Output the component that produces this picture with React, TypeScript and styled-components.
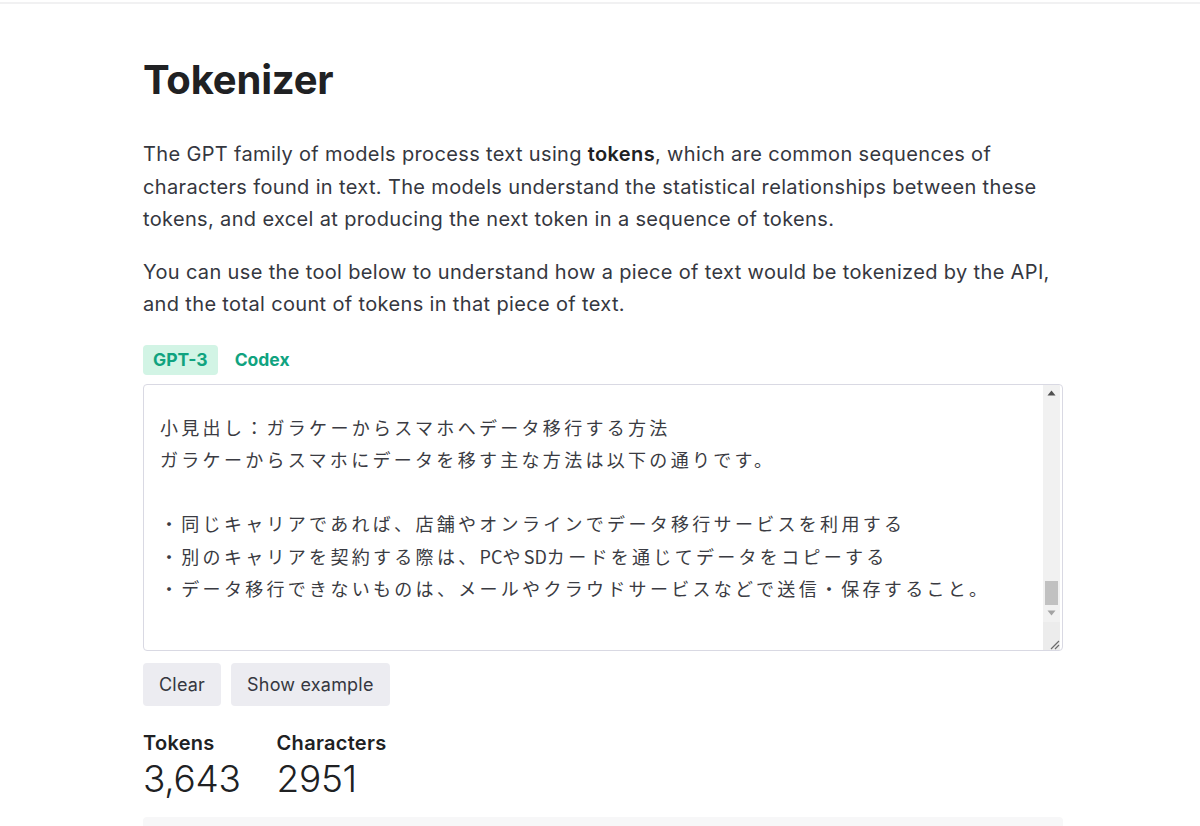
import React from 'react';
import styled, { createGlobalStyle } from 'styled-components';

const GlobalStyle = createGlobalStyle`
  html, body {
    margin: 0;
    padding: 0;
    background: #ffffff;
  }
  body {
    font-family: Inter, "Noto Sans", "Liberation Sans", sans-serif;
    color: #353740;
  }
`;

const TopRule = styled.div`
  height: 2px;
  margin-top: 2px;
  background: #f1f1f2;
`;

const Page = styled.main`
  width: 920px;
  margin-left: 143px;
  padding-top: 52px;
`;

const Title = styled.h1`
  margin: 0;
  font-size: 40px;
  line-height: 48px;
  font-weight: 700;
  color: #202123;
  letter-spacing: -0.2px;
`;

const Para = styled.p`
  margin: 0 0 20px;
  font-size: 20px;
  line-height: 32.5px;
  color: #353740;
  letter-spacing: 0.35px;
  white-space: nowrap;
  &:first-of-type {
    margin-top: 34px;
  }
  b {
    font-weight: 600;
    color: #202123;
  }
`;

const Tabs = styled.div`
  display: flex;
  gap: 7px;
  margin-top: 24px;
`;

const Tab = styled.button<{ $active?: boolean }>`
  border: none;
  border-radius: 4px;
  padding: 0 10px;
  height: 30px;
  font-family: inherit;
  font-size: 17.5px;
  font-weight: 700;
  color: #10a37f;
  background: ${(p) => (p.$active ? '#d2f4e5' : 'transparent')};
  cursor: pointer;
`;

const Editor = styled.div`
  display: flex;
  margin-top: 9px;
  height: 265px;
  border: 1px solid #d9d9e3;
  border-radius: 4px;
  overflow: hidden;
`;

const EditorText = styled.div`
  flex: 1;
  padding: 26px 0 0 16px;
  font-family: "Noto Sans CJK JP", "Noto Sans", sans-serif;
  font-weight: 400;
  font-size: 18px;
  line-height: 32.3px;
  letter-spacing: 3.3px;
  color: #3a3b42;
  white-space: pre;
`;

const Latin = styled.span`
  letter-spacing: 0;
`;

const Scrollbar = styled.div`
  width: 17px;
  margin-right: 2px;
  display: flex;
  flex-direction: column;
  background: #f1f1f1;
`;

const ArrowBox = styled.div<{ $dim?: boolean }>`
  height: 17px;
  display: flex;
  align-items: center;
  justify-content: center;
  color: ${(p) => (p.$dim ? '#a3a3a3' : '#505050')};
`;

const Track = styled.div`
  flex: 1;
  display: flex;
  flex-direction: column;
  justify-content: flex-end;
  padding: 0 2px;
`;

const Thumb = styled.div`
  height: 24px;
  background: #c1c1c1;
`;

const Corner = styled.div`
  height: 28px;
  background: #ececec;
  display: flex;
  align-items: flex-end;
  justify-content: flex-end;
`;

const Actions = styled.div`
  display: flex;
  gap: 10px;
  margin-top: 12px;
`;

const Btn = styled.button`
  border: none;
  border-radius: 4px;
  height: 43px;
  padding: 0 16px;
  font-family: inherit;
  font-size: 18px;
  letter-spacing: 0.2px;
  color: #353740;
  background: #ececf1;
  cursor: pointer;
`;

const Stats = styled.div`
  display: flex;
  gap: 36px;
  margin-top: 25px;
`;

const Stat = styled.div`
  display: flex;
  flex-direction: column;
`;

const StatLabel = styled.div`
  font-size: 20px;
  line-height: 24px;
  font-weight: 600;
  color: #202123;
  letter-spacing: 0.3px;
`;

const StatValue = styled.div`
  margin-top: 2px;
  font-size: 37px;
  line-height: 44px;
  font-weight: 300;
  color: #202123;
  letter-spacing: -0.3px;
`;

const TokenView = styled.div`
  margin-top: 16px;
  height: 30px;
  background: #f7f7f8;
  border-radius: 4px 4px 0 0;
`;

export default function App() {
  return (
    <>
      <GlobalStyle />
      <TopRule />
      <Page>
        <Title>Tokenizer</Title>
        <Para>
          The GPT family of models process text using <b>tokens</b>, which are common sequences of
          <br />
          characters found in text. The models understand the statistical relationships between these
          <br />
          tokens, and excel at producing the next token in a sequence of tokens.
        </Para>
        <Para>
          You can use the tool below to understand how a piece of text would be tokenized by the API,
          <br />
          and the total count of tokens in that piece of text.
        </Para>
        <Tabs>
          <Tab $active>GPT-3</Tab>
          <Tab>Codex</Tab>
        </Tabs>
        <Editor>
          <EditorText>
            {'小見出し：ガラケーからスマホへデータ移行する方法\n'}
            {'ガラケーからスマホにデータを移す主な方法は以下の通りです。\n'}
            {'\n'}
            {'・同じキャリアであれば、店舗やオンラインでデータ移行サービスを利用する\n'}
            {'・別のキャリアを契約する際は、'}
            <Latin>PC</Latin>
            {'や'}
            <Latin>SD</Latin>
            {'カードを通じてデータをコピーする\n'}
            {'・データ移行できないものは、メールやクラウドサービスなどで送信・保存すること。'}
          </EditorText>
          <Scrollbar>
            <ArrowBox>
              <svg width="9" height="6" viewBox="0 0 9 6">
                <path d="M4.5 0.5 L8.5 5.5 L0.5 5.5 Z" fill="currentColor" />
              </svg>
            </ArrowBox>
            <Track>
              <Thumb />
            </Track>
            <ArrowBox $dim>
              <svg width="9" height="6" viewBox="0 0 9 6">
                <path d="M0.5 0.5 L8.5 0.5 L4.5 5.5 Z" fill="currentColor" />
              </svg>
            </ArrowBox>
            <Corner>
              <svg width="12" height="12" viewBox="0 0 12 12">
                <path d="M11 3 L3 11 M11 7 L7 11" stroke="#6b6b6b" strokeWidth="1.2" />
              </svg>
            </Corner>
          </Scrollbar>
        </Editor>
        <Actions>
          <Btn>Clear</Btn>
          <Btn>Show example</Btn>
        </Actions>
        <Stats>
          <Stat>
            <StatLabel>Tokens</StatLabel>
            <StatValue>3,643</StatValue>
          </Stat>
          <Stat>
            <StatLabel>Characters</StatLabel>
            <StatValue>2951</StatValue>
          </Stat>
        </Stats>
        <TokenView />
      </Page>
    </>
  );
}
